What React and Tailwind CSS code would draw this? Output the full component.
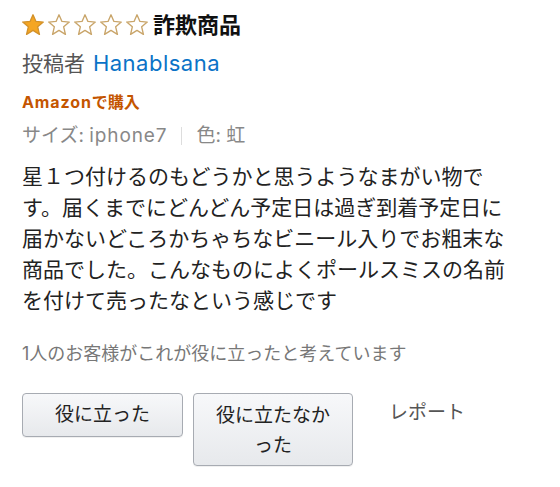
import React from 'react';

const FONT = { fontFamily: 'Inter, "Noto Sans CJK JP", sans-serif' };

function Star({ filled }) {
  return (
    <svg width="22" height="22" viewBox="0 0 24 24" className="block">
      <path
        d="M12 0.9 L15.2 8.1 L23.2 8.8 L17.1 14 L19 22.2 L12 17.9 L5 22.2 L6.9 14 L0.8 8.8 L8.8 8.1 Z"
        fill={filled ? '#f5a623' : '#ffffff'}
        stroke={filled ? '#d3922b' : '#c9a56a'}
        strokeWidth="1.5"
        strokeLinejoin="round"
      />
    </svg>
  );
}

export default function App() {
  return (
    <div className="w-[560px] h-[487px] bg-white px-[22px] pt-[12px] text-[#111]" style={FONT}>
      <div className="flex items-center h-[26px]">
        <div className="flex items-center gap-[4px]">
          <Star filled />
          <Star />
          <Star />
          <Star />
          <Star />
        </div>
        <h3 className="ml-[5px] text-[22px] font-bold leading-[26px] text-[#111]">詐欺商品</h3>
      </div>

      <div className="mt-[12px] text-[21px] leading-[26px] text-[#555]">
        投稿者 <span className="ml-[2px] text-[22px] tracking-[0.5px] text-[#0a73c7]">Hanablsana</span>
      </div>

      <div className="mt-[15px] text-[16px] leading-[20px] font-bold text-[#c45500]">
        <span className="tracking-[0.9px]">Amazon</span>で購入
      </div>

      <div className="mt-[12px] flex items-center text-[19px] leading-[24px] text-[#888]">
        <span>サイズ: <span className="tracking-[0.9px]">iphone7</span></span>
        <span className="mx-[14px] w-px h-[18px] bg-[#ddd]" />
        <span>色: 虹</span>
      </div>

      <p className="mt-[13px] w-[500px] text-[21px] leading-[31px] text-[#222]">
        星１つ付けるのもどうかと思うようなまがい物です。届くまでにどんどん予定日は過ぎ到着予定日に届かないどころかちゃちなビニール入りでお粗末な商品でした。こんなものによくポールスミスの名前を付けて売ったなという感じです
      </p>

      <p className="mt-[26px] text-[18px] leading-[24px] text-[#777]">1人のお客様がこれが役に立ったと考えています</p>

      <div className="mt-[27px] flex items-start">
        <button className="w-[161px] h-[44px] rounded-[4px] border border-[#a7abb2] bg-gradient-to-b from-[#f7f8fa] to-[#e7e9ec] text-[19px] text-[#222] shadow-[0_1px_0_rgba(0,0,0,0.06)]">
          役に立った
        </button>
        <button className="ml-[10px] w-[160px] px-[14px] pt-[7px] pb-[4px] rounded-[4px] border border-[#a7abb2] bg-gradient-to-b from-[#f7f8fa] to-[#e7e9ec] text-[19px] leading-[30px] text-[#222] shadow-[0_1px_0_rgba(0,0,0,0.06)]">
          役に立たなかった
        </button>
        <span className="ml-[36px] mt-[8px] text-[19px] leading-[24px] text-[#555]">レポート</span>
      </div>
    </div>
  );
}
